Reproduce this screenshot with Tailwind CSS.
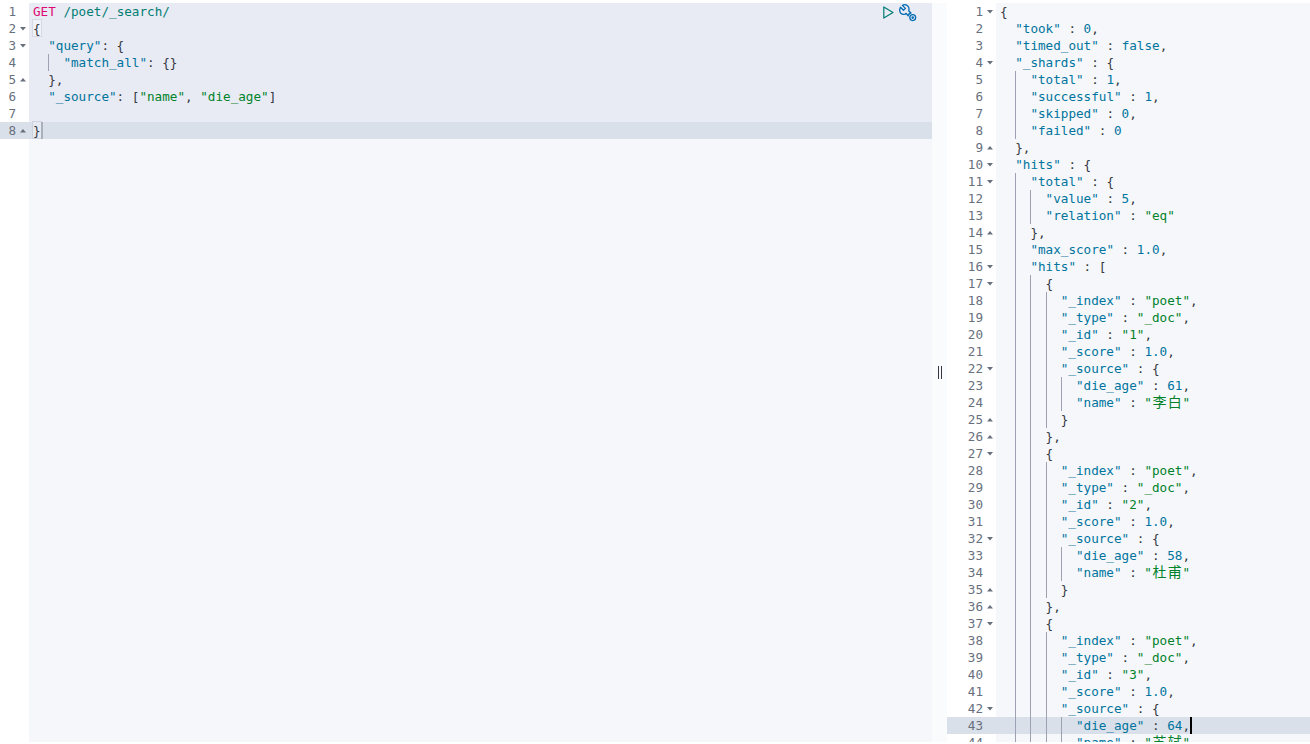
<!DOCTYPE html>
<html lang="en">

<head>
    <meta charset="UTF-8">
    <title>Console</title>
    <script src="https://cdn.jsdelivr.net/npm/@tailwindcss/browser@4"></script>
</head>

<body class="bg-white h-[744px] overflow-hidden font-['DejaVu_Sans_Mono','Noto_Sans_CJK_SC',monospace] text-[12.64px] leading-[17px] text-[#343741]">
    <main class="flex h-[739px] mt-[3px]">
        <!-- Request editor -->
        <section class="relative w-[932px] flex flex-col overflow-hidden bg-[#f5f7fa]">
            <div id="request-rows" class="flex flex-col"></div>
            <div class="flex-1"><div class="w-[29px] h-full bg-white"></div></div>
            <div class="absolute top-[3px] left-[883px] flex items-start gap-[5px]">
                <button title="Click to send request" class="block w-[11px] h-[13px]">
                    <svg class="block" width="11" height="13" viewBox="0 0 11 13" fill="none" stroke="#017d73" stroke-width="1.2" stroke-linejoin="round">
                        <path d="M.8.9 10 6.5.8 12.1Z" />
                    </svg>
                </button>
                <button title="Click to get cURL syntax" class="block w-[18px] h-[18px] -mt-[2px]">
                    <svg class="block" width="18" height="18" viewBox="0 0 16 16" fill="none" stroke="#006bb4" stroke-width="1.15" stroke-linejoin="round">
                        <path d="M1.3 2.9 4 5.6l1.7-1.7L3 1.2C4.8.3 7 .7 8.1 2.2c.9 1.2 1 2.6.5 3.8l2 2c-1 .2-2.3 1.4-2.5 2.5L6.4 8.3 5.5 9c-1.3.5-2.8.3-3.9-.8C.5 7 .5 4.6 1.3 2.9Z" />
                        <circle cx="12.2" cy="12.1" r="2.6" />
                        <circle cx="12.2" cy="12.1" r=".6" />
                    </svg>
                </button>
            </div>
        </section>

        <!-- Resize handle -->
        <div class="w-[15px] flex items-center justify-center bg-[#fafbfd]">
            <div class="w-[4px] h-[13px] border-x border-[#343741]"></div>
        </div>

        <!-- Response viewer -->
        <section class="flex-1 flex flex-col overflow-hidden bg-[#f5f7fa]">
            <div id="response-rows" class="flex flex-col"></div>
        </section>
    </main>

    <script>
        const KEY = 'text-[#00749e]';
        const STR = 'text-[#00822a]';
        const NUM = 'text-[#00749e]';
        const CURSOR = '<span class="inline-block w-[2px] h-[17px] align-top bg-black"></span>';

        const request = [
            '<span class="text-[#dd0a73]">GET</span> <span class="text-[#017d73]">/poet/_search/</span>',
            '<span class="inline-block w-[1ch] h-[16px] bg-[#f0f2f7] outline outline-[#d3dae6]">{</span>',
            '  "query": {',
            '    "match_all": {}',
            '  },',
            '  "_source": ["name", "die_age"]',
            '',
            '<span class="inline-block w-[1ch] h-[16px] bg-[#e6e9f0] outline outline-[#ccd3df]">}</span><span class="inline-block w-[2px] h-[17px] align-top bg-[#a9b0bc]"></span>'
        ];
        const requestFolds = { 2: 'down', 3: 'down', 5: 'up', 8: 'up' };

        const doc = (id, age, name) => [
            '      {',
            '        "_index" : "poet",',
            '        "_type" : "_doc",',
            `        "_id" : "${id}",`,
            '        "_score" : 1.0,',
            '        "_source" : {',
            `          "die_age" : ${age},`,
            `          "name" : "${name}"`,
            '        }',
            '      },'
        ];
        const response = [
            '{',
            '  "took" : 0,',
            '  "timed_out" : false,',
            '  "_shards" : {',
            '    "total" : 1,',
            '    "successful" : 1,',
            '    "skipped" : 0,',
            '    "failed" : 0',
            '  },',
            '  "hits" : {',
            '    "total" : {',
            '      "value" : 5,',
            '      "relation" : "eq"',
            '    },',
            '    "max_score" : 1.0,',
            '    "hits" : [',
            ...doc(1, 61, '李白'),
            ...doc(2, 58, '杜甫'),
            '      {',
            '        "_index" : "poet",',
            '        "_type" : "_doc",',
            '        "_id" : "3",',
            '        "_score" : 1.0,',
            '        "_source" : {',
            '          "die_age" : 64,|',
            '          "name" : "苏轼"'
        ];
        const responseFolds = {
            1: 'down', 4: 'down', 9: 'up', 10: 'down', 11: 'down', 14: 'up', 16: 'down', 17: 'down',
            22: 'down', 25: 'up', 26: 'up', 27: 'down', 32: 'down', 35: 'up', 36: 'up', 37: 'down', 42: 'down'
        };

        // colour the JSON tokens of one line, lines with their own markup are left alone
        function colour(text) {
            if (text.includes('<span')) return text;
            return text.replace(/"[^"]*"(\s*:)?|\b\d+(\.\d+)?\b|\bfalse\b/g, (m) => {
                if (m.startsWith('"')) {
                    if (m.endsWith(':')) {
                        const end = m.lastIndexOf('"') + 1;
                        return `<span class="${KEY}">${m.slice(0, end)}</span>${m.slice(end)}`;
                    }
                    return `<span class="${STR}">${m}</span>`;
                }
                return `<span class="${NUM}">${m}</span>`;
            })
                // the editor gives a wide character two cells
                .replace(/[^\x00-\x7f]/g, '<span class="inline-block w-[15.22px] text-center text-[14px]">$&</span>')
                .replace('|', CURSOR);
        }

        function arrow(dir) {
            if (!dir) return '';
            const d = dir === 'down' ? 'M0 0h6L3 3.5Z' : 'M0 3.5h6L3 0Z';
            return `<svg class="ml-[4px] mt-[7px]" width="6" height="4" viewBox="0 0 6 4" fill="#69707d"><path d="${d}" /></svg>`;
        }

        function row(line, n, numWidth, folds, selected, active) {
            const text = line.trimStart();
            const level = Math.floor((line.length - text.length) / 2);
            let guides = '';
            for (let i = 0; i < level; i++) {
                guides += i === 0
                    ? '<span class="w-[2ch] shrink-0"></span>'
                    : '<span class="w-[2ch] shrink-0 border-l border-[#9da1b1]"></span>';
            }
            const gutterBg = active ? 'bg-[#dae0e9]' : 'bg-white';
            const codeBg = active ? 'bg-[#dae0e9]' : selected ? 'bg-[#e8ebf3]' : '';
            const gutter = `<div class="flex shrink-0 h-full ${gutterBg}" style="width:${numWidth + 13}px">
                <span class="text-right text-[#69707d] shrink-0" style="width:${numWidth}px">${n}</span>${arrow(folds[n])}</div>`;
            return `<div class="flex shrink-0 h-[17px]">${gutter}
                <div class="flex flex-1 h-full pl-[4px] whitespace-pre ${codeBg}">${guides}<span>${colour(text)}</span></div></div>`;
        }

        document.getElementById('request-rows').innerHTML = request
            .map((l, i) => row(l, i + 1, 16, requestFolds, true, i === 7)).join('');
        document.getElementById('response-rows').innerHTML = response
            .map((l, i) => row(l, i + 1, 36, responseFolds, false, i === 42)).join('');
    </script>
</body>

</html>
